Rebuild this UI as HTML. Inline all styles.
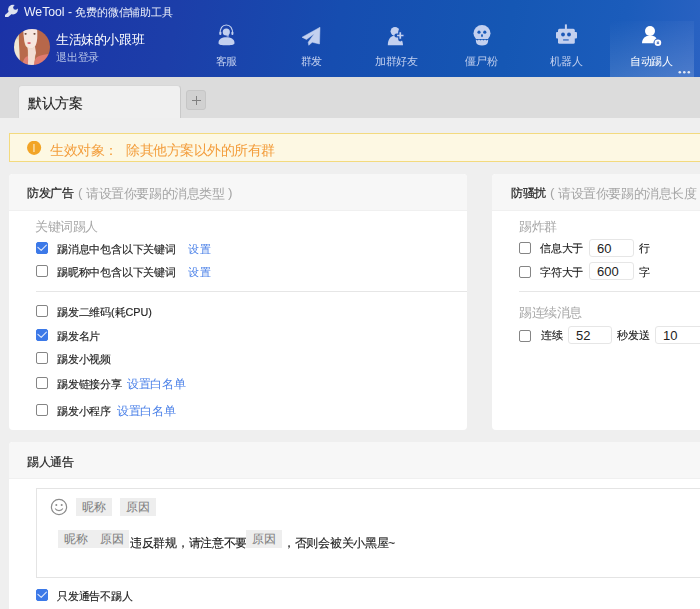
<!DOCTYPE html>
<html><head><meta charset="utf-8">
<style>
*{margin:0;padding:0;box-sizing:border-box}
html,body{width:700px;height:609px;overflow:hidden}
body{position:relative;background:#efefef;font-family:"Liberation Sans",sans-serif;color:#1c1c1c;font-size:12px}
.abs{position:absolute;white-space:nowrap}
#hdr{position:absolute;left:0;top:0;width:700px;height:77px;background:linear-gradient(100deg,#1b32a6 0%,#1c3ea9 25%,#164db0 48%,#1557b4 72%,#1b5cbb 88%,#2a62c2 100%)}
.navt{position:absolute;top:53.5px;width:85px;text-align:center;font-size:12px;line-height:16px;color:#c3d0ef;transform-origin:50% 0;transform:scale(.9)}
.nav svg{position:absolute}
#tabbar{position:absolute;left:0;top:77px;width:700px;height:41px;background:#dcdcdc}
.tab{position:absolute;left:18px;top:85px;width:163px;height:33px;background:#f0f0f0;border:1px solid #d8d8d8;border-right-color:#c9c9c9;border-bottom:none;border-radius:4px 4px 0 0}
.plus{position:absolute;left:186px;top:90px;width:20px;height:20px;background:#d1d1d1;border:1px solid #c6c6c6;border-radius:3px}
.notice{position:absolute;left:9px;top:133px;width:720px;height:29px;background:#fdf8e3;border:1px solid #f3da7e}
.card{position:absolute;background:#fff;border-radius:4px;overflow:hidden}
.card .ch{position:absolute;left:0;top:0;right:0;height:37px;background:#f7f7f7;border-bottom:1px solid #f0f0f0}
.cb{position:absolute;width:12.2px;height:12.2px;border:1.2px solid #858585;border-radius:2px;background:#fff}
.cb.on{background:#3c79e8;border-color:#3c79e8}
.s{transform-origin:0 0;transform:scale(.9)}
.t12{font-size:12px;line-height:16px;transform-origin:0 0;transform:scale(.9);-webkit-text-stroke:0.15px currentColor}
.t13{font-size:13px;line-height:16px;transform-origin:0 0;transform:scale(.9);-webkit-text-stroke:0.15px currentColor}
.t14{font-size:14px;line-height:16px;transform-origin:0 0;transform:scale(.9)}
.gray{color:#a8a8a8}
.tt{color:#1e1e1e;-webkit-text-stroke:0.2px #1e1e1e}
.sub{color:#a5a5a5}
.link{color:#4a80e8;-webkit-text-stroke:0 !important}
.inp{position:absolute;height:18px;border:1px solid #e6e6e6;border-radius:3px;background:#fff;font-size:13px;line-height:17px;padding-left:7px;color:#222}
.tag{position:absolute;height:18px;background:#eeeeee;color:#7c7c7c;font-size:12px;line-height:18px;text-align:center}
</style></head><body>

<div id="hdr"></div>
<!-- wrench -->
<svg class="abs" style="left:0;top:0" width="24" height="24" viewBox="0 0 24 24">
<defs><mask id="wm"><rect width="24" height="24" fill="#fff"/><circle cx="15.5" cy="7.5" r="2.3" fill="#000"/><path d="M14.3 5.5 L17.5 2.2 L21.5 6.5 L17.6 8.8 Z" fill="#000"/></mask></defs>
<g mask="url(#wm)" fill="#dfe3ee">
<circle cx="13" cy="9.6" r="4.9"/>
<path d="M11.6 11.6 L6.4 16.2" stroke="#dfe3ee" stroke-width="3.6" stroke-linecap="round"/>
</g></svg>
<div class="abs" style="left:24px;top:5px;font-size:12px;line-height:16px;transform-origin:0 0;transform:scale(.9);color:#eef1fa"><span style="font-size:13.6px">WeTool - </span>免费的微信辅助工具</div>

<!-- avatar -->
<div class="abs" style="left:14.25px;top:29.25px;width:36px;height:36px;border-radius:50%;overflow:hidden">
<svg style="position:absolute;left:0;top:0;filter:blur(0.55px)" width="36" height="36" viewBox="0 0 36 36">
<rect x="-2" y="-2" width="40" height="40" fill="#e2d0ae"/>
<ellipse cx="3" cy="19" rx="3.5" ry="9" fill="#f0e7d4"/>
<ellipse cx="6" cy="29" rx="2.5" ry="4" fill="#f3e2d6"/>
<path d="M5 3 C8 -1 11 1 10.5 8 C10 14 11 18 13.8 18.8 L14 37 L5 37 C7 29 4.5 18 5 10 Z" fill="#b86a4b"/>
<path d="M21.5 -2 L38 -2 L38 38 L20 38 C21.5 31 21.5 23 20.8 17.5 C23 10 23.5 4 21.5 -2 Z" fill="#b7674a"/>
<path d="M9.3 -2 L23 -2 C23.6 6 23.6 13 21.3 17 C19.3 19.6 16 19.9 13.6 18.6 C11 16 9.2 10 9.3 -2Z" fill="#f7e6df"/>
<path d="M13.5 18.3 C15.5 19.8 18.5 19.8 21 17.5 L22 24 C20.5 28 20 31 20.5 37 L13 37 C14.2 30 14.8 24 13.5 18.3Z" fill="#f2dcd2"/>
<path d="M8 37 C9 31 11 28 13.8 27 C14.5 31 14 34 13.5 37Z" fill="#e08074"/>
<path d="M20 37 C20 32 21 29 24 27.5 C28 26 33 25 38 24.5 L38 38 L20 38Z" fill="#df7b6f"/>
<ellipse cx="11.6" cy="4.8" rx="1.1" ry="0.9" fill="#6a4536"/>
<ellipse cx="20.5" cy="4.8" rx="1.1" ry="0.9" fill="#6a4536"/>
<ellipse cx="15.1" cy="14.1" rx="1.9" ry="0.8" fill="#d54c5c"/>
</svg></div>
<div class="abs" style="left:55.5px;top:31px;font-size:14px;line-height:18px;transform-origin:0 0;transform:scale(.9);color:#fff">生活妹的小跟班</div>
<div class="abs" style="left:55.5px;top:50px;font-size:12px;line-height:16px;transform-origin:0 0;transform:scale(.9);color:#b3c0e6">退出登录</div>

<!-- nav -->
<div style="position:absolute;left:610px;top:21px;width:84px;height:56px;background:linear-gradient(170deg,rgba(255,255,255,0.0),rgba(255,255,255,0.17))"></div>
<div class="navt" style="left:184px">客服</div>
<div class="navt" style="left:269px">群发</div>
<div class="navt" style="left:354px">加群好友</div>
<div class="navt" style="left:439px">僵尸粉</div>
<div class="navt" style="left:524px">机器人</div>
<div class="navt" style="left:609px;color:#fff">自动踢人</div>
<svg class="abs" style="left:678px;top:70px" width="14" height="5" viewBox="0 0 14 5"><g fill="#e3e9f6"><circle cx="1.8" cy="2.2" r="1.3"/><circle cx="6.3" cy="2.2" r="1.3"/><circle cx="10.8" cy="2.2" r="1.3"/></g></svg>
<!-- headset -->
<svg class="abs" style="left:210px;top:20px" width="35" height="30" viewBox="0 0 35 30">
<g fill="#c3d0ef">
<circle cx="16.3" cy="12" r="3.6"/>
<path d="M10.2 14.5 C9.5 8 12.5 5 16.3 5 C20.1 5 23.2 8 22.5 14.5" fill="none" stroke="#c3d0ef" stroke-width="1.1"/>
<rect x="9.4" y="11.5" width="2" height="3.6" rx="1"/>
<rect x="21.4" y="11.5" width="2" height="3.6" rx="1"/>
<rect x="16.5" y="15.3" width="2.5" height="1.2" rx="0.6"/>
<path d="M8.5 23 C8.5 19 12 17.3 16.3 17.3 C20.6 17.3 24.5 19 24.5 23 C24.5 25 21 25.3 16.3 25.3 C11.6 25.3 8.5 25 8.5 23Z"/>
</g></svg>
<!-- plane -->
<svg class="abs" style="left:295px;top:20px" width="35" height="30" viewBox="0 0 35 30">
<path d="M25 7.25 L7 17.25 L11.5 19.5 L19.3 13.7 L13.2 22.2 L13.75 25.25 L17.25 22.25 L24.5 24 Z" fill="#c3d0ef" stroke="#c3d0ef" stroke-width="0.5" stroke-linejoin="round"/>
</svg>
<!-- add friend -->
<svg class="abs" style="left:380px;top:20px" width="35" height="30" viewBox="0 0 35 30">
<circle cx="15" cy="11.3" r="4.4" fill="#c3d0ef"/>
<path d="M7.8 25.3 C7.8 19 11 15.5 15 15.5 C19 15.5 22.8 19 23 25.3Z" fill="#c3d0ef"/>
<path d="M16.5 15.5 L24 15.5 M20.25 11.7 L20.25 19.3" stroke="#1a52b5" stroke-width="4.2" stroke-linecap="round"/>
<path d="M17 15.5 L23.5 15.5 M20.25 12.2 L20.25 18.8" stroke="#c3d0ef" stroke-width="1.7"/>
</svg>
<!-- skull -->
<svg class="abs" style="left:465px;top:20px" width="35" height="30" viewBox="0 0 35 30">
<g fill="#c3d0ef">
<ellipse cx="17" cy="13.2" rx="8.5" ry="8.2"/>
<path d="M10.8 19.5 L23.2 19.5 L23 22 C22.5 24.6 20 25.5 17 25.5 C14 25.5 11.5 24.6 11 22Z"/>
</g>
<g fill="#1a5ab9">
<circle cx="14" cy="12.2" r="1.6"/>
<circle cx="19.8" cy="12.2" r="1.6"/>
<ellipse cx="17" cy="15.6" rx="0.9" ry="1.6"/>
<path d="M11 19.5 L12.5 20.5 L14 19.5 L15.5 20.5 L17 19.5 L18.5 20.5 L20 19.5 L21.5 20.5 L23 19.5 L23 19 L11 19Z"/>
</g></svg>
<!-- robot -->
<svg class="abs" style="left:545px;top:20px" width="43" height="30" viewBox="0 0 43 30">
<g fill="#c3d0ef">
<rect x="19.9" y="4.4" width="2" height="5"/>
<rect x="13" y="8.7" width="16.8" height="15" rx="1.5"/>
<rect x="11" y="12" width="21" height="6.6" rx="1"/>
</g>
<g fill="#1c58b8">
<circle cx="18" cy="14.5" r="1.9"/>
<circle cx="24" cy="14.5" r="1.9"/>
<rect x="18.1" y="19.4" width="5.6" height="1.1"/>
</g></svg>
<!-- kick user -->
<svg class="abs" style="left:635px;top:20px" width="35" height="30" viewBox="0 0 35 30">
<circle cx="15" cy="11" r="5" fill="#fff"/>
<path d="M7 23.3 C7 18.5 10.5 15.5 15 15.5 C19 15.5 21 17 21.5 18.5 L21.5 23.3Z" fill="#fff"/>
<circle cx="22.9" cy="22.75" r="4.4" fill="#3567c2"/>
<circle cx="22.9" cy="22.75" r="3.3" fill="#fff"/>
<path d="M21.8 21.65 L24 23.85 M24 21.65 L21.8 23.85" stroke="#5a7fc8" stroke-width="1.1"/>
</svg>

<!-- tab bar -->
<div id="tabbar"></div>
<div class="tab"></div>
<div class="abs" style="left:28px;top:95px;font-size:15px;line-height:18px;transform-origin:0 0;transform:scale(.9);color:#1c1c1c;-webkit-text-stroke:0.15px #1c1c1c">默认方案</div>
<div class="plus"><div style="position:absolute;left:4.8px;top:8.6px;width:9px;height:1.3px;background:#808080"></div><div style="position:absolute;left:8.65px;top:4.75px;width:1.3px;height:9px;background:#808080"></div></div>

<!-- notice -->
<div class="notice"></div>
<svg class="abs" style="left:27px;top:141px" width="15" height="15" viewBox="0 0 15 15"><circle cx="7.1" cy="6.8" r="7.1" fill="#f2a426"/><rect x="6.3" y="3" width="1.3" height="8" fill="#fbe3b8"/></svg>
<div class="abs" style="left:50px;top:141.5px;font-size:15px;line-height:18px;color:#f39d3c;transform-origin:0 0;transform:scale(.9)">生效对象：</div>
<div class="abs" style="left:126px;top:141.5px;font-size:15px;line-height:18px;color:#f39d3c;transform-origin:0 0;transform:scale(.9)">除其他方案以外的所有群</div>

<!-- card 1 -->
<div class="card" style="left:9px;top:174px;width:458px;height:256px">
 <div class="ch"></div>
</div>
<div class="abs t13 tt" style="left:27px;top:186px">防发广告</div><div class="abs t14 sub" style="left:77.5px;top:184.5px;font-size:15px">(</div><div class="abs t14 sub" style="left:85.5px;top:186px">请设置你要踢的消息类型</div><div class="abs t14 sub" style="left:228px;top:184.5px;font-size:15px">)</div>
<div class="abs t14 gray" style="left:35px;top:219px">关键词踢人</div>
<div class="cb on" style="left:36px;top:242px"></div>
<div class="abs t12" style="left:57px;top:241.5px">踢消息中包含以下关键词</div>
<div class="abs t13 link" style="left:187.5px;top:241.5px;font-size:12.5px">设置</div>
<div class="cb" style="left:36px;top:265px"></div>
<div class="abs t12" style="left:57px;top:264.5px">踢昵称中包含以下关键词</div>
<div class="abs t13 link" style="left:187.5px;top:264.5px;font-size:12.5px">设置</div>
<div class="abs" style="left:36px;top:291px;width:431px;height:1px;background:#e6e6e6"></div>
<div class="cb" style="left:36px;top:305px"></div>
<div class="abs t12" style="left:57px;top:304.5px">踢发二维码(耗CPU)</div>
<div class="cb on" style="left:36px;top:329px"></div>
<div class="abs t12" style="left:57px;top:328.5px">踢发名片</div>
<div class="cb" style="left:36px;top:352px"></div>
<div class="abs t12" style="left:57px;top:351.5px">踢发小视频</div>
<div class="cb" style="left:36px;top:377px"></div>
<div class="abs t12" style="left:57px;top:376.5px">踢发链接分享</div><div class="abs t13 link" style="left:127px;top:376.5px">设置白名单</div>
<div class="cb" style="left:36px;top:404px"></div>
<div class="abs t12" style="left:57px;top:403.5px">踢发小程序</div><div class="abs t13 link" style="left:116.5px;top:403.5px">设置白名单</div>

<!-- card 2 -->
<div class="card" style="left:492px;top:174px;width:260px;height:256px">
 <div class="ch"></div>
</div>
<div class="abs t13 tt" style="left:511px;top:186px">防骚扰</div><div class="abs t14 sub" style="left:549.5px;top:184.5px;font-size:15px">(</div><div class="abs t14 sub" style="left:558px;top:186px">请设置你要踢的消息长度</div>
<div class="abs t14 gray" style="left:519px;top:219px">踢炸群</div>
<div class="cb" style="left:519px;top:242px"></div>
<div class="abs t12" style="left:540px;top:241px">信息大于</div>
<div class="inp" style="left:589px;top:239px;width:45px">60</div>
<div class="abs t12" style="left:639px;top:241px">行</div>
<div class="cb" style="left:519px;top:266px"></div>
<div class="abs t12" style="left:540px;top:265px">字符大于</div>
<div class="inp" style="left:589px;top:262px;width:45px">600</div>
<div class="abs t12" style="left:639px;top:265px">字</div>
<div class="abs" style="left:519px;top:291px;width:200px;height:1px;background:#e6e6e6"></div>
<div class="abs t14 gray" style="left:519px;top:305px">踢连续消息</div>
<div class="cb" style="left:519px;top:330px"></div>
<div class="abs t12" style="left:541px;top:328px">连续</div>
<div class="inp" style="left:568px;top:326px;width:44px">52</div>
<div class="abs t12" style="left:617px;top:328px">秒发送</div>
<div class="inp" style="left:655px;top:326px;width:60px">10</div>

<!-- card 3 -->
<div class="card" style="left:9px;top:442px;width:720px;height:200px">
 <div class="ch"></div>
</div>
<div class="abs t13 tt" style="left:27px;top:454.5px">踢人通告</div>
<div class="abs" style="left:36px;top:488px;width:700px;height:90px;border:1px solid #e4e4e4;background:#fff"></div>
<svg class="abs" style="left:50px;top:498px" width="18" height="18" viewBox="0 0 18 18"><circle cx="9" cy="9" r="7.6" fill="none" stroke="#8c8c8c" stroke-width="1.2"/><circle cx="6.3" cy="7" r="1" fill="#8c8c8c"/><circle cx="11.7" cy="7" r="1" fill="#8c8c8c"/><path d="M5.2 10.5 C6.5 13.3 11.5 13.3 12.8 10.5" fill="none" stroke="#8c8c8c" stroke-width="1.1"/></svg>
<div class="tag" style="left:76px;top:498px;width:36px">昵称</div>
<div class="tag" style="left:120px;top:498px;width:36px">原因</div>
<div class="tag" style="left:58px;top:530px;width:36px">昵称</div>
<div class="tag" style="left:94px;top:530px;width:35px">原因</div>
<div class="abs t13" style="left:130px;top:536px">违反群规，请注意不要</div>
<div class="tag" style="left:246px;top:530px;width:36px">原因</div>
<div class="abs t13" style="left:283px;top:536px">，否则会被关小黑屋~</div>
<div class="cb on" style="left:36px;top:589px"></div>
<div class="abs t12" style="left:57px;top:588.5px">只发通告不踢人</div>

<!-- checkmarks -->
<svg class="abs" style="left:0;top:0" width="700" height="609">
<g fill="none" stroke="#e3ebfb" stroke-width="1.1" stroke-linecap="round" stroke-linejoin="round">
<path d="M37.9 247.4 L41.2 250.3 L46.4 245.2"/>
<path d="M37.9 334.4 L41.2 337.3 L46.4 332.2"/>
<path d="M37.9 594.4 L41.2 597.3 L46.4 592.2"/>
</g></svg>
</body></html>
